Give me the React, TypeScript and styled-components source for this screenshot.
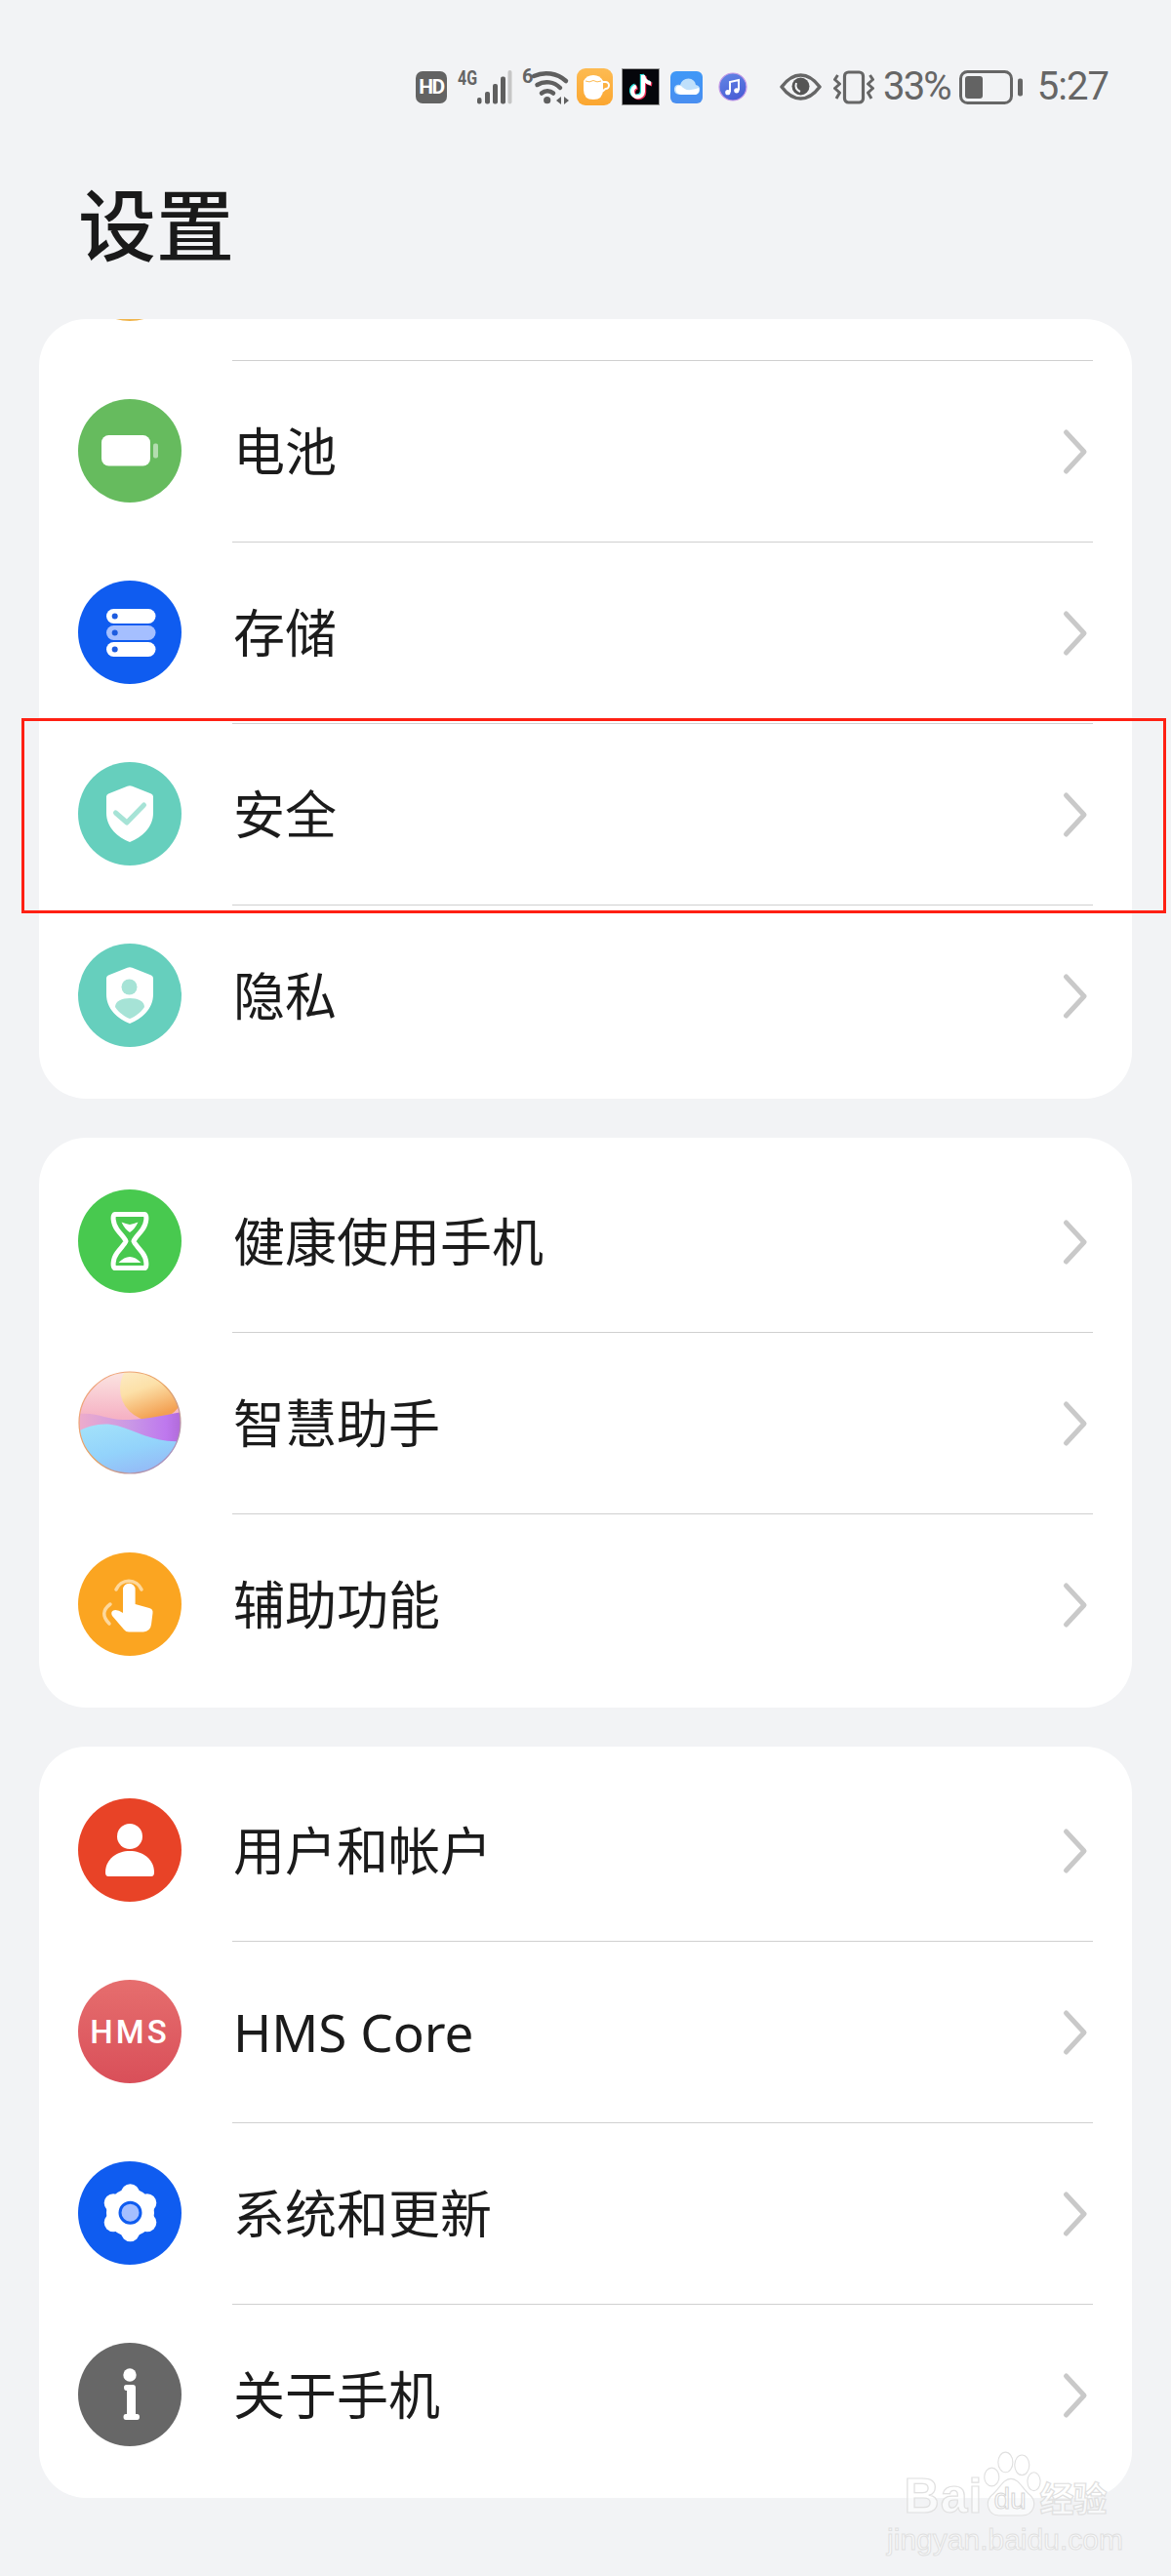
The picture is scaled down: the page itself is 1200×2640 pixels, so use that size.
import React from "react";
import styled, { createGlobalStyle } from "styled-components";

const GlobalStyle = createGlobalStyle`
  html, body { margin: 0; padding: 0; background: #f2f3f5; }
  * { box-sizing: border-box; }
`;

const CJK = `"Noto Sans CJK SC", "Noto Sans", sans-serif`;
const LATIN = `Roboto, "Noto Sans", sans-serif`;

const Page = styled.div`
  position: relative;
  width: 1200px;
  height: 2640px;
  overflow: hidden;
  background: #f2f3f5;
  font-family: ${CJK};
`;

const StatusBar = styled.div`
  display: flex;
  align-items: center;
  height: 58px;
  margin-top: 60px;
  padding-left: 426px;
  color: #646464;
  font-family: ${LATIN};
`;

const Slot = styled.div<{ $ml?: number; $w: number; $h: number }>`
  flex: none;
  display: flex;
  margin-left: ${(p) => p.$ml ?? 0}px;
  width: ${(p) => p.$w}px;
  height: ${(p) => p.$h}px;
`;

const HdBadge = styled.div`
  flex: none;
  width: 32px;
  height: 33px;
  border-radius: 7px;
  background: #636363;
  color: #fff;
  display: flex;
  align-items: center;
  justify-content: center;
  font-size: 21px;
  font-weight: 700;
  letter-spacing: -1.5px;
`;

const StatusText = styled.span<{ $ml: number; $spacing: number }>`
  flex: none;
  margin-left: ${(p) => p.$ml}px;
  font-size: 40px;
  line-height: 58px;
  letter-spacing: ${(p) => p.$spacing}px;
  color: #666;
`;

const Header = styled.header`
  padding: 58px 0 51px 80px;
`;

const Title = styled.h1`
  margin: 0;
  font-size: 80px;
  line-height: 100px;
  font-weight: 500;
  color: #1a1a1a;
`;

const CardStack = styled.main`
  display: flex;
  flex-direction: column;
  gap: 40px;
  margin: 0 40px;
`;

const Card = styled.section<{ $clipped?: boolean }>`
  background: #fff;
  border-radius: 48px;
  padding: ${(p) => (p.$clipped ? "0 0 13px" : "13px 0")};
`;

const ClippedTop = styled.div`
  height: 42px;
  padding-left: 40px;
`;

const Sliver = styled.div`
  width: 106px;
  height: 2px;
  overflow: hidden;
  display: flex;
  align-items: flex-end;
  &::before {
    content: "";
    flex: none;
    width: 106px;
    height: 106px;
    border-radius: 50%;
    background: #f0b44a;
  }
`;

const Row = styled.div`
  position: relative;
  display: flex;
  height: 186px;
  padding: 0 40px;
`;

const Badge = styled.div<{ $bg: string }>`
  flex: none;
  width: 106px;
  height: 106px;
  margin: 40px 52px 0 0;
  border-radius: 50%;
  background: ${(p) => p.$bg};
  color: #fff;
  display: flex;
  align-items: center;
  justify-content: center;
  font-family: ${LATIN};
  font-size: 33px;
  font-weight: 500;
  letter-spacing: 3px;
  svg {
    display: block;
    flex: none;
  }
`;

const RowBody = styled.div<{ $divider: boolean }>`
  flex: 1;
  display: flex;
  align-items: center;
  justify-content: space-between;
  padding: 0 4px 0 1px;
  border-top: 1.5px solid ${(p) => (p.$divider ? "#d0d0d0" : "transparent")};
`;

const Label = styled.span<{ $latin?: boolean }>`
  font-size: 53px;
  line-height: 70px;
  margin-bottom: ${(p) => (p.$latin ? 0 : 5)}px;
  color: #1b1b1b;
  font-family: ${(p) => (p.$latin ? `"Noto Sans", Roboto, sans-serif` : CJK)};
  font-weight: 400;
`;

const Highlight = styled.div`
  position: absolute;
  left: -18px;
  right: -35px;
  top: -5px;
  bottom: -9px;
  border: 3px solid #ff2013;
  pointer-events: none;
`;

const Watermark = styled.div`
  position: absolute;
  left: 920px;
  top: 2508px;
  width: 220px;
  display: flex;
  flex-direction: column;
  align-items: center;
  font-family: "Liberation Sans", sans-serif;
  color: rgba(255, 255, 255, 0.55);
  -webkit-text-stroke: 1.2px #e0e0e0;
  pointer-events: none;
`;

const MarkLine = styled.div`
  display: flex;
  align-items: flex-end;
  height: 76px;
`;

const MarkBai = styled.span`
  font-size: 50px;
  line-height: 52px;
  font-weight: 700;
  letter-spacing: 1px;
`;

const MarkCn = styled.span`
  font-family: ${CJK};
  font-size: 35px;
  line-height: 50px;
  font-weight: 700;
  letter-spacing: -1px;
`;

const Paw = styled.div`
  position: relative;
  width: 62px;
  height: 76px;
  margin: 0 -2px;
`;

const PawDu = styled.span`
  position: absolute;
  left: 13px;
  bottom: 7px;
  font-size: 30px;
  line-height: 32px;
  -webkit-text-stroke: 1px #d6d6d6;
`;

const MarkUrl = styled.div`
  font-size: 30px;
  line-height: 32px;
  margin-top: 3px;
  -webkit-text-stroke: 1px #e0e0e0;
`;

const Chevron = () => (
  <svg width="28" height="48" viewBox="0 0 28 48" fill="none">
    <path d="M4.5 4 L23 24 L4.5 44" stroke="#c9c9c9" strokeWidth="5" strokeLinecap="round" strokeLinejoin="round" />
  </svg>
);

const Icon: React.FC<{ children: React.ReactNode }> = ({ children }) => (
  <svg width="106" height="106" viewBox="0 0 106 106">
    {children}
  </svg>
);

const SHIELD = "M50.5 24.8 Q53 23.6 55.5 24.8 L75 32.5 Q77 33.4 77 35.5 V52 C77 67 65 77.5 53 82 C41 77.5 29 67 29 52 V35.5 Q29 33.4 31 32.5 Z";

const BatteryIcon = () => (
  <Icon>
    <rect x="24" y="37" width="50" height="31.5" rx="7.5" fill="#fff" />
    <rect x="77" y="45.5" width="5" height="15" rx="2" fill="#fff" opacity="0.5" />
  </Icon>
);

const StorageIcon = () => (
  <Icon>
    <rect x="29" y="29" width="50.5" height="15" rx="7.5" fill="#fff" />
    <rect x="29" y="46" width="50.5" height="15" rx="7.5" fill="#a5bfff" />
    <rect x="29" y="63" width="50.5" height="15" rx="7.5" fill="#fff" />
    <circle cx="37.7" cy="36.5" r="3" fill="#1d5cdf" />
    <circle cx="37.7" cy="53.5" r="3" fill="#1d5cdf" />
    <circle cx="37.7" cy="70.5" r="3" fill="#1d5cdf" />
  </Icon>
);

const SecurityIcon = () => (
  <Icon>
    <path d={SHIELD} fill="#fff" />
    <path d="M38.5 52 L50 62 L67.5 44" fill="none" stroke="#a6e3d6" strokeWidth="5" strokeLinecap="round" strokeLinejoin="round" />
  </Icon>
);

const PrivacyIcon = () => (
  <Icon>
    <path d={SHIELD} fill="#fff" />
    <circle cx="52.5" cy="44.5" r="8" fill="#a6e3d6" />
    <path d="M38 65 C38 59 45 56 53 56 C61 56 68 59 68 65 C64 71 58 75 53 77 C48 75 42 71 38 65 Z" fill="#a6e3d6" />
  </Icon>
);

const HourglassIcon = () => (
  <Icon>
    <path
      d="M38 25.5 H68 C71 25.5 70.5 35 66 41 C62 46.5 58 50 57 53 C58 56 62 59.5 66 65 C70.5 71 71 80.5 68 80.5 H38 C35 80.5 35.5 71 40 65 C44 59.5 48 56 49 53 C48 50 44 46.5 40 41 C35.5 35 35 25.5 38 25.5 Z"
      fill="none"
      stroke="#fff"
      strokeWidth="5"
      strokeLinejoin="round"
    />
    <path d="M44.5 33.5 Q49 35 53 36 Q57 35 61.5 33.5 Q58 41 53 44 Q48 41 44.5 33.5 Z" fill="#fff" />
    <path d="M41.5 75 Q53 63 64.5 75 Z" fill="#fff" />
  </Icon>
);

const AssistantIcon = () => (
  <svg width="106" height="106" viewBox="0 0 106 106">
    <defs>
      <clipPath id="orbClip">
        <circle cx="53" cy="53" r="52" />
      </clipPath>
      <linearGradient id="orbBase" x1="0" y1="0" x2="0" y2="1">
        <stop offset="0" stopColor="#fbe6e2" />
        <stop offset="0.45" stopColor="#f6b2c4" />
        <stop offset="1" stopColor="#f2a0b8" />
      </linearGradient>
      <linearGradient id="orbSun" x1="0" y1="0" x2="0.35" y2="1">
        <stop offset="0" stopColor="#fdf3d8" />
        <stop offset="0.55" stopColor="#fce0a8" />
        <stop offset="1" stopColor="#f3a052" />
      </linearGradient>
      <linearGradient id="orbBand" x1="0" y1="0" x2="1" y2="0">
        <stop offset="0" stopColor="#eeaccb" />
        <stop offset="0.5" stopColor="#c998e6" />
        <stop offset="0.85" stopColor="#be78ee" />
        <stop offset="1" stopColor="#b06ad8" />
      </linearGradient>
      <linearGradient id="orbSea" x1="0" y1="0" x2="0.5" y2="1">
        <stop offset="0" stopColor="#a4e3fa" />
        <stop offset="0.6" stopColor="#93d3fb" />
        <stop offset="1" stopColor="#94bcf7" />
      </linearGradient>
      <linearGradient id="orbRim" x1="0" y1="0" x2="1" y2="1">
        <stop offset="0" stopColor="#f2a68a" />
        <stop offset="0.5" stopColor="#e7a25f" />
        <stop offset="1" stopColor="#8f8be0" />
      </linearGradient>
    </defs>
    <g clipPath="url(#orbClip)">
      <rect width="106" height="106" fill="url(#orbBase)" />
      <circle cx="76" cy="18" r="33" fill="url(#orbSun)" />
      <path d="M0 44 C20 42 30 50 46 50 C66 50 85 46 106 42 V106 H0 Z" fill="url(#orbBand)" />
      <path d="M0 62 C10 56 26 52 40 56 C60 62 80 74 106 72 V106 H0 Z" fill="url(#orbSea)" />
    </g>
    <circle cx="53" cy="53" r="52" fill="none" stroke="url(#orbRim)" strokeWidth="1.2" />
  </svg>
);

const HandIcon = () => (
  <Icon>
    <path d="M39 38 A14 14 0 0 1 65 38" fill="none" stroke="#fdd89c" strokeWidth="3.5" strokeLinecap="round" />
    <path d="M33 53 Q21 62 32 73" fill="none" stroke="#fdd89c" strokeWidth="3.5" strokeLinecap="round" />
    <path
      d="M46 38 A6.3 6.3 0 0 1 58.6 38 V53 L73 57 Q77 58 76.5 62 L75 74 Q74 81 67 81.5 H52 Q49 81.5 47 79 L35 65 Q33 61 36 59.5 Q40 58 46 62 Z"
      fill="#fff"
    />
  </Icon>
);

const UserIcon = () => (
  <Icon>
    <circle cx="53" cy="39" r="13" fill="#fff" />
    <path d="M31 80 Q28 80 28 76 C28 62 40 54 53 54 C66 54 78 62 78 76 Q78 80 75 80 Z" fill="#fff" />
  </Icon>
);

const GEAR_LOBES = [-90, -30, 30, 90, 150, 210];

const GearIcon = () => (
  <Icon>
    <circle cx="53.5" cy="52.7" r="24.5" fill="#fff" />
    {GEAR_LOBES.map((a) => (
      <circle
        key={a}
        cx={53.5 + 20 * Math.cos((a * Math.PI) / 180)}
        cy={52.7 + 20 * Math.sin((a * Math.PI) / 180)}
        r="9.5"
        fill="#fff"
      />
    ))}
    <circle cx="53.5" cy="52.7" r="10.5" fill="#a5bfff" stroke="#0f5cf0" strokeWidth="3" />
  </Icon>
);

const InfoIcon = () => (
  <Icon>
    <circle cx="53" cy="33" r="6.7" fill="#fff" />
    <path
      d="M47 45.5 Q47 43 49.5 43 H56 Q59 43 59 46 V73 H60.5 Q63 73 63 76 T60.5 79 H49 Q46.5 79 46.5 76 T49 73 H50 V49 H49.5 Q47 49 47 45.5 Z"
      fill="#fff"
    />
  </Icon>
);

type Item = { icon?: React.ReactNode; bg: string; label: string; latin?: boolean; text?: string; highlight?: boolean };

const CARD_A: Item[] = [
  { icon: <BatteryIcon />, bg: "#66bb5e", label: "电池" },
  { icon: <StorageIcon />, bg: "#0f5cf0", label: "存储" },
  { icon: <SecurityIcon />, bg: "#66cfbd", label: "安全", highlight: true },
  { icon: <PrivacyIcon />, bg: "#66cfbd", label: "隐私" },
];
const CARD_B: Item[] = [
  { icon: <HourglassIcon />, bg: "#48c94f", label: "健康使用手机" },
  { icon: <AssistantIcon />, bg: "transparent", label: "智慧助手" },
  { icon: <HandIcon />, bg: "#fba521", label: "辅助功能" },
];
const CARD_C: Item[] = [
  { icon: <UserIcon />, bg: "#e84327", label: "用户和帐户" },
  { text: "HMS", bg: "linear-gradient(180deg, #e66e6e, #d94f59)", label: "HMS Core", latin: true },
  { icon: <GearIcon />, bg: "#0f5cf0", label: "系统和更新" },
  { icon: <InfoIcon />, bg: "#676767", label: "关于手机" },
];

const SettingsRow: React.FC<{ item: Item; divider: boolean }> = ({ item, divider }) => (
  <Row>
    <Badge $bg={item.bg}>{item.icon ?? item.text}</Badge>
    <RowBody $divider={divider}>
      <Label $latin={item.latin}>{item.label}</Label>
      <Chevron />
    </RowBody>
    {item.highlight && <Highlight />}
  </Row>
);

const StatusIcons = () => (
  <StatusBar>
    <HdBadge>HD</HdBadge>
    <Slot $ml={10} $w={58} $h={44}>
      <svg width="58" height="44" viewBox="0 -4 58 44">
        <text x="1" y="16" fontSize="21" fontWeight="700" fill="#646464" textLength="20" lengthAdjust="spacingAndGlyphs" fontFamily="Roboto, sans-serif">4G</text>
        <rect x="21" y="29" width="4.5" height="6.5" rx="2" fill="#5f5f5f" />
        <rect x="29" y="23" width="5" height="12.5" rx="2" fill="#5f5f5f" />
        <rect x="37" y="15" width="5" height="20.5" rx="2" fill="#5f5f5f" />
        <rect x="45" y="7.5" width="5" height="28" rx="2" fill="#5f5f5f" />
        <rect x="52.5" y="1" width="4" height="34.5" rx="2" fill="#c6c6c6" />
      </svg>
    </Slot>
    <Slot $ml={8} $w={52} $h={44}>
      <svg width="52" height="44" viewBox="0 -2 52 44">
        <text x="1" y="16" fontSize="20" fontWeight="700" fill="#646464" fontFamily="Roboto, sans-serif">6</text>
        <path d="M13 9 A30 30 0 0 1 46 14" fill="none" stroke="#5f5f5f" strokeWidth="4.5" strokeLinecap="round" />
        <path d="M16.5 18 A19 19 0 0 1 40 21" fill="none" stroke="#5f5f5f" strokeWidth="4.5" strokeLinecap="round" />
        <path d="M21 26.5 A9 9 0 0 1 33 26.5" fill="none" stroke="#5f5f5f" strokeWidth="4.5" strokeLinecap="round" />
        <circle cx="26.7" cy="33.7" r="3.6" fill="#5f5f5f" />
        <path d="M41 30 V38 L36 34 Z M44 30 L49 34 L44 38 Z" fill="#5f5f5f" />
      </svg>
    </Slot>
    <Slot $ml={5} $w={37} $h={38}>
      <svg width="37" height="38" viewBox="0 0 37 38">
        <defs>
          <linearGradient id="coffeeBg" x1="0" y1="0" x2="0" y2="1">
            <stop offset="0" stopColor="#fdbb52" />
            <stop offset="1" stopColor="#fba630" />
          </linearGradient>
        </defs>
        <rect width="37" height="38" rx="9" fill="url(#coffeeBg)" />
        <path d="M27 14 h2.5 a3.5 3.5 0 0 1 0 7 L26 24" fill="none" stroke="#fff" strokeWidth="2" />
        <path d="M7 13 Q10 7 17 7 Q24 7 27 13 V22 Q27 32 17 32 Q7 32 7 22 Z" fill="#fff" />
        <path d="M9 13 Q13 15 17 12.5 Q21 15 25 13" fill="none" stroke="#fdbb52" strokeWidth="1" />
      </svg>
    </Slot>
    <Slot $ml={9} $w={39} $h={38}>
      <svg width="39" height="38" viewBox="0 0 39 38">
        <rect x="0.5" y="0.5" width="38" height="37" fill="#05060b" stroke="#9a9a9a" />
        <g fill="none" strokeWidth="4" strokeLinecap="butt">
          <g stroke="#2fe0dc" transform="translate(-1.2 -1)">
            <path d="M22 7 V24 A5.5 5.5 0 1 1 15 18.5" />
            <path d="M22 7 C22.5 12 26 15 30 15.5" />
          </g>
          <g stroke="#f2305a" transform="translate(1.2 1)">
            <path d="M22 7 V24 A5.5 5.5 0 1 1 15 18.5" />
            <path d="M22 7 C22.5 12 26 15 30 15.5" />
          </g>
          <g stroke="#fff">
            <path d="M22 7 V24 A5.5 5.5 0 1 1 15 18.5" />
            <path d="M22 7 C22.5 12 26 15 30 15.5" />
          </g>
        </g>
      </svg>
    </Slot>
    <Slot $ml={11} $w={33} $h={33}>
      <svg width="33" height="33" viewBox="0 0 33 33">
        <defs>
          <linearGradient id="cloudBg" x1="0" y1="0" x2="0" y2="1">
            <stop offset="0" stopColor="#3f98f7" />
            <stop offset="1" stopColor="#4a8ef0" />
          </linearGradient>
        </defs>
        <rect width="33" height="33" rx="6" fill="url(#cloudBg)" />
        <path d="M10 24 Q3 23.5 4 17.5 Q5 13 10 14 Q12 7.5 18.5 7.5 Q25 8 26 14 Q31 15 30 20 Q29 24 25 24 Z" fill="#bfe0fb" />
        <path d="M11 24 Q5 23 5.5 18 Q6 14 11 15 Q15 20 21 19 Q27 18 29 17 Q30.5 22 26 24 Z" fill="#fff" />
      </svg>
    </Slot>
    <Slot $ml={16} $w={30} $h={30}>
      <svg width="30" height="30" viewBox="0 0 30 30">
        <defs>
          <linearGradient id="musicBg" x1="0" y1="0" x2="0.4" y2="1">
            <stop offset="0" stopColor="#6488e6" />
            <stop offset="1" stopColor="#4a5fd6" />
          </linearGradient>
        </defs>
        <circle cx="15" cy="15" r="14" fill="url(#musicBg)" stroke="#c79be6" strokeWidth="1.2" />
        <path d="M12 20.5 V10 L21 8 V18.5" fill="none" stroke="#fff" strokeWidth="2" />
        <circle cx="9.8" cy="20.7" r="2.6" fill="#fff" />
        <circle cx="18.8" cy="18.8" r="2.6" fill="#fff" />
      </svg>
    </Slot>
    <Slot $ml={33} $w={43} $h={28}>
      <svg width="43" height="28" viewBox="0 0 43 28">
        <path d="M2 14 Q11 2 21.5 2 Q32 2 41 14 Q32 26 21.5 26 Q11 26 2 14 Z" fill="none" stroke="#666" strokeWidth="3.5" strokeLinejoin="round" />
        <circle cx="21.5" cy="13.5" r="9" fill="#555" />
        <path d="M17 10 Q15 16 21 19" fill="none" stroke="#f2f3f5" strokeWidth="2" />
      </svg>
    </Slot>
    <Slot $ml={12} $w={42} $h={35}>
      <svg width="42" height="35" viewBox="0 0 42 35">
        <rect x="11.5" y="2" width="19" height="31" rx="4" fill="none" stroke="#666" strokeWidth="3.2" />
        <path d="M4.5 5 L1.5 9.5 L6.5 14 L1.5 18.5 L6.5 23 L3 29" fill="none" stroke="#666" strokeWidth="3" strokeLinejoin="round" />
        <path d="M37.5 5 L40.5 9.5 L35.5 14 L40.5 18.5 L35.5 23 L39 29" fill="none" stroke="#666" strokeWidth="3" strokeLinejoin="round" />
      </svg>
    </Slot>
    <StatusText $ml={9} $spacing={-1.8}>33%</StatusText>
    <Slot $ml={9} $w={65} $h={35}>
      <svg width="65" height="35" viewBox="0 0 65 35">
        <rect x="1.5" y="1.5" width="52" height="32" rx="7" fill="none" stroke="#666" strokeWidth="3" />
        <rect x="6" y="6" width="18" height="23" rx="3" fill="#636363" />
        <rect x="60" y="8.5" width="5" height="18" rx="2" fill="#666" />
      </svg>
    </Slot>
    <StatusText $ml={15} $spacing={-1}>5:27</StatusText>
  </StatusBar>
);

export default function App() {
  return (
    <Page>
      <GlobalStyle />
      <StatusIcons />
      <Header>
        <Title>设置</Title>
      </Header>
      <CardStack>
        <Card $clipped>
          <ClippedTop>
            <Sliver />
          </ClippedTop>
          {CARD_A.map((item) => (
            <SettingsRow key={item.label} item={item} divider />
          ))}
        </Card>
        <Card>
          {CARD_B.map((item, i) => (
            <SettingsRow key={item.label} item={item} divider={i > 0} />
          ))}
        </Card>
        <Card>
          {CARD_C.map((item, i) => (
            <SettingsRow key={item.label} item={item} divider={i > 0} />
          ))}
        </Card>
      </CardStack>
      <Watermark>
        <MarkLine>
          <MarkBai>Bai</MarkBai>
          <Paw>
            <svg width="62" height="76" viewBox="0 0 66 76" fill="rgba(255,255,255,0.55)" stroke="#e0e0e0" strokeWidth="1.2">
              <ellipse cx="12" cy="30" rx="8" ry="10" />
              <ellipse cx="27" cy="14" rx="8" ry="11" />
              <ellipse cx="45" cy="17" rx="8" ry="11" />
              <ellipse cx="58" cy="35" rx="7" ry="10" />
              <path d="M33 32 C42 32 46 44 54 50 C62 58 58 72 45 72 H20 C8 72 4 58 12 50 C20 44 24 32 33 32 Z" />
            </svg>
            <PawDu>du</PawDu>
          </Paw>
          <MarkCn>经验</MarkCn>
        </MarkLine>
        <MarkUrl>jingyan.baidu.com</MarkUrl>
      </Watermark>
    </Page>
  );
}
